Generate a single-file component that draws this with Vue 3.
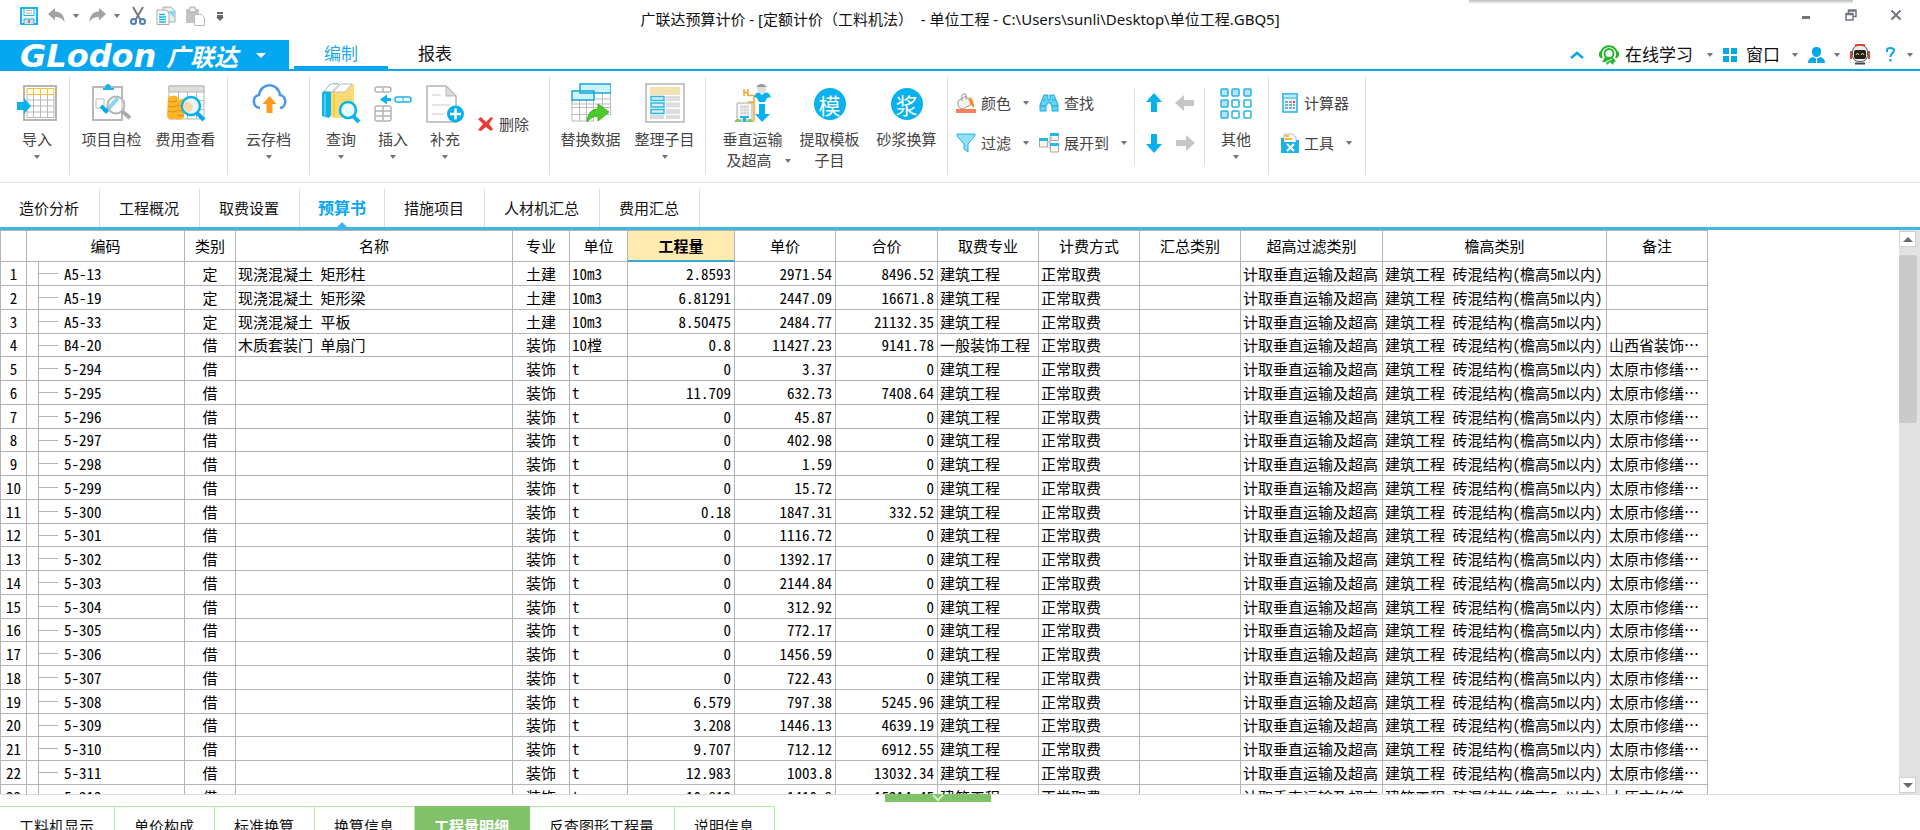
<script setup>
const moduleTabs = ['造价分析', '工程概况', '取费设置', '预算书', '措施项目', '人材机汇总', '费用汇总']
const detailTabs = ['工料机显示', '单价构成', '标准换算', '换算信息', '工程量明细', '反查图形工程量', '说明信息']

const columns = [
  { key: 'no', title: '', cls: 'c-no' },
  { key: 'code', title: '编码', cls: 'c-code' },
  { key: 'kind', title: '类别', cls: 'c-kind' },
  { key: 'name', title: '名称', cls: 'c-name' },
  { key: 'major', title: '专业', cls: 'c-major' },
  { key: 'unit', title: '单位', cls: 'c-unit' },
  { key: 'qty', title: '工程量', cls: 'c-qty' },
  { key: 'price', title: '单价', cls: 'c-price' },
  { key: 'total', title: '合价', cls: 'c-total' },
  { key: 'feeMajor', title: '取费专业', cls: 'c-fee' },
  { key: 'feeMode', title: '计费方式', cls: 'c-mode' },
  { key: 'sumKind', title: '汇总类别', cls: 'c-sum' },
  { key: 'over', title: '超高过滤类别', cls: 'c-over' },
  { key: 'eave', title: '檐高类别', cls: 'c-eave' },
  { key: 'note', title: '备注', cls: 'c-note' },
]

const source = [
  ['A5-13', '2.8593', '2971.54', '8496.52', '现浇混凝土 矩形柱', '10m3'],
  ['A5-19', '6.81291', '2447.09', '16671.8', '现浇混凝土 矩形梁', '10m3'],
  ['A5-33', '8.50475', '2484.77', '21132.35', '现浇混凝土 平板', '10m3'],
  ['B4-20', '0.8', '11427.23', '9141.78', '木质套装门 单扇门', '10樘'],
  ['5-294', '0', '3.37', '0'],
  ['5-295', '11.709', '632.73', '7408.64'],
  ['5-296', '0', '45.87', '0'],
  ['5-297', '0', '402.98', '0'],
  ['5-298', '0', '1.59', '0'],
  ['5-299', '0', '15.72', '0'],
  ['5-300', '0.18', '1847.31', '332.52'],
  ['5-301', '0', '1116.72', '0'],
  ['5-302', '0', '1392.17', '0'],
  ['5-303', '0', '2144.84', '0'],
  ['5-304', '0', '312.92', '0'],
  ['5-305', '0', '772.17', '0'],
  ['5-306', '0', '1456.59', '0'],
  ['5-307', '0', '722.43', '0'],
  ['5-308', '6.579', '797.38', '5245.96'],
  ['5-309', '3.208', '1446.13', '4639.19'],
  ['5-310', '9.707', '712.12', '6912.55'],
  ['5-311', '12.983', '1003.8', '13032.34'],
  ['5-312', '10.812', '1410.8', '15214.45'],
]

const rows = source.map(([code, qty, price, total, name = '', unit = 't'], i) => ({
  no: i + 1,
  code,
  kind: i < 3 ? '定' : '借',
  name,
  major: i < 3 ? '土建' : '装饰',
  unit,
  qty,
  price,
  total,
  feeMajor: i === 3 ? '一般装饰工程' : '建筑工程',
  feeMode: '正常取费',
  sumKind: '',
  over: '计取垂直运输及超高',
  eave: '建筑工程 砖混结构(檐高5m以内)',
  note: i < 3 ? '' : i === 3 ? '山西省装饰…' : '太原市修缮…',
}))
</script>

<template>
  <div class="app">
    <header class="titlebar">
      <div class="quick">
        <button aria-label="保存">
          <svg width="18" height="18" viewBox="0 0 18 18"><path d="M1 1h16v16H1z" fill="#e8f8ff" stroke="#1fb2e8" stroke-width="2" /><path d="M4 1.500h10v7H4z" fill="#fff" stroke="#1fb2e8" /><path d="M6 3.500h6M6 6h6" stroke="#aaa" /><path d="M4 17v-5h10v5" fill="#ddd" stroke="#1fb2e8" /><path d="M9 13v3" stroke="#888" stroke-width="2" /></svg>
        </button>
        <button aria-label="撤销" class="with-caret">
          <svg width="17" height="16" viewBox="0 0 17 16"><path d="M0 6L7 0v3.500c6 0 9.500 4 9.500 11-2-4-4.500-5.500-9.500-5.500v3.500z" fill="#a3a3a3" /></svg><i class="caret"></i>
        </button>
        <button aria-label="重做" class="with-caret">
          <svg width="17" height="16" viewBox="0 0 17 16"><path d="M17 6L10 0v3.500C4 3.500.5 7.500.5 14.500 2.500 10.500 5 9 10 9v3.500z" fill="#a3a3a3" /></svg><i class="caret"></i>
        </button>
        <button aria-label="剪切">
          <svg width="16" height="20" viewBox="0 0 16 20"><path d="M3 1l7.500 13M13 1L5.500 14" stroke="#7b7b7b" stroke-width="2" /><circle cx="3.500" cy="15.500" r="2.500" fill="none" stroke="#4a7ebb" stroke-width="2" /><circle cx="12.500" cy="15.500" r="2.500" fill="none" stroke="#4a7ebb" stroke-width="2" /></svg>
        </button>
        <button aria-label="复制">
          <svg width="20" height="20" viewBox="0 0 20 20"><path d="M7 1h8l4 4v11H7z" fill="#eee" stroke="#aaa" /><path d="M12 5l6 7V5z" fill="#7fd8f5" /><path d="M1 4h9l3 3v11.500H1z" fill="#fff" stroke="#aaa" /><path d="M3 8.500h6M3 11h7M3 13.500h7M3 16h7" stroke="#1fb2e8" stroke-width="1.500" /></svg>
        </button>
        <button aria-label="粘贴">
          <svg width="20" height="20" viewBox="0 0 20 20"><path d="M0 3h13v14H0z" fill="#c3c3c3" /><path d="M4 3V1h5v2h1v3H3V3z" fill="#eee" stroke="#aaa" /><path d="M8.500 8.500h7l3 3v8h-10z" fill="#fff" stroke="#bbb" /></svg>
        </button>
        <button aria-label="自定义快速访问">
          <svg width="8" height="11" viewBox="0 0 8 11"><path d="M1 1h6v2H1zM1 4h6v2H1zM0 6h8L4 10z" fill="#666a73" /></svg>
        </button>
      </div>
      <div class="doc-title">广联达预算计价 - [定额计价（工料机法）&nbsp; - 单位工程 - C:\Users\sunli\Desktop\单位工程.GBQ5]</div>
      <div class="win-ctl">
        <button aria-label="最小化"><svg width="12" height="12" viewBox="0 0 12 12"><path d="M2 7h8v3H2z" fill="#70747f" /></svg></button>
        <button aria-label="还原"><svg width="12" height="12" viewBox="0 0 12 12"><path d="M3.500 4V1H11v6.500H8.500M3 2h8" fill="none" stroke="#70747f" stroke-width="1.500" /><path d="M1 4.500h7V11H1zM1 5.500h7" fill="none" stroke="#70747f" stroke-width="1.500" /></svg></button>
        <button aria-label="关闭"><svg width="12" height="12" viewBox="0 0 12 12"><path d="M1.500 1.500l9 9M10.500 1.500l-9 9" stroke="#70747f" stroke-width="2" /></svg></button>
      </div>
      <div class="top-shade"></div>
    </header>

    <nav class="menubar">
      <button class="brand"><span class="brand-en">GLodon</span><span class="brand-cn">广联达</span><i class="caret light"></i></button>
      <button class="menu on">编制</button>
      <button class="menu">报表</button>
      <div class="tools">
        <button aria-label="收起"><svg width="14" height="8" viewBox="0 0 14 8"><path d="M1 7l6-5 6 5" fill="none" stroke="#0aa6ec" stroke-width="2.500" /></svg></button>
        <button class="learn">
          <svg width="20" height="21" viewBox="0 0 20 21"><path d="M3 14a8 8 0 1 1 14 0" fill="none" stroke="#27b62b" stroke-width="2" /><circle cx="10" cy="9.500" r="4.500" fill="none" stroke="#27b62b" stroke-width="2" /><path d="M1 7h2v7H1.500L0 12V9zM17 7h2l1 2v3l-2 2h-1z" fill="#27b62b" /><path d="M6 13l-3 5h4l1 3 3-3 3 3 1-3 2-1-4-4-3 1z" fill="#27b62b" /><path d="M7 18l6-3" stroke="#fff" /></svg>
          <span>在线学习</span><i class="caret"></i>
        </button>
        <button class="window">
          <svg width="14" height="14" viewBox="0 0 14 14"><path d="M0 0h6v6H0zM8 0h6v6H8zM0 8h6v6H0zM8 8h6v6H8z" fill="#0aa6ec" /></svg>
          <span>窗口</span><i class="caret"></i>
        </button>
        <button aria-label="用户" class="user">
          <svg width="17" height="16" viewBox="0 0 17 16"><path d="M4 4q0-4 4.500-4T13 4v2q-1 4-4.500 4T4 6zM0 16q0-5 5-6l3.500 2L12 10q5 1 5 6z" fill="#0aa6ec" /><path d="M8.500 12v4" stroke="#fff" /></svg><i class="caret"></i>
        </button>
        <button aria-label="助手">
          <svg width="20" height="21" viewBox="0 0 20 21"><rect x="2.500" y="1.500" width="15" height="16" rx="6" fill="#eee" stroke="#555" /><path d="M5 1h10" stroke="#e0442e" stroke-width="2" /><path d="M1 7v8M19 7v8" stroke="#c84a38" stroke-width="2" /><rect x="4" y="6" width="12" height="9" rx="2" fill="#222" /><path d="M6 11l1.500-2L9 11M11 11l1.500-2L14 11" stroke="#f2e02a" fill="none" /><path d="M5 19.500h10" stroke="#444" stroke-width="2" /></svg>
        </button>
        <button aria-label="帮助" class="help">
          <svg width="9" height="15" viewBox="0 0 9 15"><path d="M1 5V3q0-2 3.500-2T8 3.500C8 6 4.500 6 4.500 10" fill="none" stroke="#0aa6ec" stroke-width="2" /><path d="M3.500 12h2v2.500h-2z" fill="#0aa6ec" /></svg><i class="caret"></i>
        </button>
      </div>
    </nav>

    <section class="ribbon">
      <div class="group g-import">
        <button class="big">
          <svg width="40" height="40" viewBox="0 0 40 40"><path d="M7 3h32v34H7z" fill="#fff" stroke="#b5b5b5" stroke-width="2" /><path d="M10 11.500h27v23H10zM10 17h27M10 23h27M10 29h27M16.500 11v24M23.500 11v24M30.500 11v24" fill="none" stroke="#b9b9b9" /><path d="M10 5.500h27v6H10zM16.500 5v6M23.500 5v6M30.500 5v6" fill="#fffbe8" stroke="#f7bd3c" /><path d="M0 19h7v-4l7 8-7 8v-4H0z" fill="#0ab2ee" /></svg>
          <span>导入</span><i class="caret"></i>
        </button>
      </div>
      <div class="group g-check">
        <button class="big wide">
          <svg width="40" height="40" viewBox="0 0 40 40"><path d="M1 4h29v33H1z" fill="#fff" stroke="#b9b9b9" stroke-width="2" /><path d="M11 5h2q0-4 3-4t3 4h3v2H11z" fill="#1fb2e8" /><path d="M4 16h8v9H4z" fill="#fff" stroke="#bbb" /><path d="M9 23l5 5 12-13" fill="none" stroke="#08aaf0" stroke-width="4" /><circle cx="24" cy="22" r="8.500" fill="#ffffff80" stroke="#b5b5b5" stroke-width="2" /><path d="M30 28l8 7" stroke="#aaa" stroke-width="4" /></svg>
          <span>项目自检</span>
        </button>
        <button class="big wide">
          <svg width="40" height="40" viewBox="0 0 40 40"><path d="M3 3h35v33H3z" fill="#fff" stroke="#b5b5b5" /><path d="M3 3h35v6H3z" fill="#dededa" stroke="#b5b5b5" /><path d="M3 17.500h35M3 26.500h35M12.500 9v27M21.500 9v27M30.500 9v27" stroke="#bbb" /><path d="M2 14q6-3 10 0l1 3q5-3 5 1v17q-5 3-9 1-7 1-8-3z" fill="#fdb52a" /><path d="M2 18q5 2 9 0M2 23q5 2 9 0M2 28q5 2 9 0M11 22q4 2 7 0M11 27q4 2 7 0M11 32q4 2 7 0" fill="none" stroke="#e08e0c" /><circle cx="25" cy="23" r="9" fill="#e8f7ff" stroke="#08b2ee" stroke-width="2.500" /><circle cx="22" cy="24" r="5" fill="#f8d9a8" /><path d="M31 30l7 7" stroke="#08aaf0" stroke-width="4" /></svg>
          <span>费用查看</span>
        </button>
      </div>
      <div class="group g-cloud">
        <button class="big">
          <svg width="40" height="40" viewBox="0 0 40 40"><path d="M11 25C3 24 3 13 10 12 12-1 29-1 31 12c7 1 7 12 0 13" fill="none" stroke="#4796f2" stroke-width="2.500" /><path d="M20.500 13l7 8h-4v9h-6v-9h-4z" fill="#ff9a1c" /></svg>
          <span>云存档</span><i class="caret"></i>
        </button>
      </div>
      <div class="group g-edit">
        <button class="big">
          <svg width="40" height="40" viewBox="0 0 40 40"><path d="M1 10L9 1l8-1-6 9v22l-3 4-7-2z" fill="#08b4e8" /><path d="M4 11v22" stroke="#9de3f5" /><path d="M10 10L20 1h13v27l-11 7H12q-2-1-2-4z" fill="#fddb74" /><path d="M3 8L10 1h8l-7 8zM12 9l8-8h11l-7 8z" fill="#fff" stroke="#bbb" /><path d="M13 11v22" stroke="#ffc743" stroke-width="2" /><circle cx="27" cy="27" r="8" fill="#e8faff" stroke="#08b4e8" stroke-width="2.500" /><path d="M32 33l6 6" stroke="#08b4e8" stroke-width="4" /></svg>
          <span>查询</span><i class="caret"></i>
        </button>
        <button class="big">
          <svg width="40" height="40" viewBox="0 0 40 40"><g fill="#fff" stroke="#b5b5b5" stroke-width="1.500"><rect x="2" y="4" width="16" height="5" rx="2" /><rect x="2" y="23" width="16" height="15" rx="2" /><path d="M10 4v5M10 23v15M2 28h16M2 33h16" /></g><rect x="22" y="14" width="16" height="5" rx="2" fill="#fff" stroke="#1fb2e8" stroke-width="1.500" /><path d="M30 14v5" stroke="#1fb2e8" /><path d="M7 16.500l7-5V15h4v3h-4v3.500z" fill="#08b2ee" /></svg>
          <span>插入</span><i class="caret"></i>
        </button>
        <button class="big">
          <svg width="40" height="40" viewBox="0 0 40 40"><path d="M2 3h19l10 10v26H2z" fill="#fff" stroke="#b5b5b5" stroke-width="1.500" /><path d="M21 3v10h10z" fill="#ddd" stroke="#b5b5b5" /><path d="M7 12h9M7 22h18M7 31h12" stroke="#ddd" stroke-width="1.500" /><circle cx="30.500" cy="31" r="8.500" fill="#08b0e8" /><path d="M25 31h11M30.500 25.500v11" stroke="#fff" stroke-width="2.500" /></svg>
          <span>补充</span><i class="caret"></i>
        </button>
        <button class="small delete">
          <svg width="16" height="16" viewBox="0 0 16 16"><path d="M0 3l3-2 5 5 5-5 2 1-4 6 4 5-2 2-5-4-5 4-3-1 5-6z" fill="#ee3a35" /></svg>
          <span>删除</span>
        </button>
      </div>
      <div class="group g-data">
        <button class="big wide">
          <svg width="40" height="40" viewBox="0 0 40 40"><path d="M1 16h39v5H1zM8.500 10v28M15.500 10v28M22.500 10v28M31.500 10v20M39.500 10v22M1 16.500V38h22M1 24.500h38M1 31.500h38" fill="none" stroke="#bbb" /><path d="M9 1h31v9H9zM1 8h22v9H1z" fill="#cdf3ff" stroke="#16a7d6" stroke-width="1.500" /><path d="M16 39q1-13 11-13v-5l11 8-11 9v-5q-7 0-11 6z" fill="#4ccb2d" stroke="#35b11c" /></svg>
          <span>替换数据</span>
        </button>
        <button class="big wide">
          <svg width="40" height="40" viewBox="0 0 40 40"><path d="M1 1h38v38H1z" fill="#fff" stroke="#b5b5b5" stroke-width="1.500" /><path d="M5 4h30v8H5z" fill="#f5e2b3" /><path d="M6 13.500h13v4H6zM6 20h13v4H6zM6 26.500h13v4H6z" fill="#e3eaf0" stroke="#25bbec" stroke-width="1.500" /><path d="M21 13h14v5H21zM21 19.500h14v5H21zM21 26h14v5H21zM5 32h14v4H5zM21 32h14v4H21z" fill="#dcdce0" /></svg>
          <span>整理子目</span><i class="caret"></i>
        </button>
      </div>
      <div class="group g-trans">
        <button class="big wide">
          <svg width="40" height="40" viewBox="0 0 40 40"><path d="M11 6v7M15 6v7M11 9.500h4" stroke="#f7a32b" stroke-width="1.500" /><path d="M15 12.500h6v26M15 19h6" fill="none" stroke="#ffa526" stroke-width="1.500" /><path d="M4 20h15v17H4z" fill="#f7f7f7" stroke="#aaa" /><path d="M7 24h9M7 27h9M7 30h9M9 22v10M12 22v10M15 22v10" stroke="#ccc" /><path d="M7 35h9v-2h-9zM10 35h3v4h-3z" fill="#1fb2e8" /><path d="M1 39q3-6 9 0zM13 39q4-6 8 0z" fill="#86c672" /><path d="M24 3q5-5 9 0v5q-4 5-8 0z" fill="#ddd" /><path d="M23 4q5-6 11 0z" fill="#999" /><path d="M21 14q3-7 7-3 1 2 2 0 5-4 8 3l-4 1-2 4h-6l-2-4zM26 21h6v10h5l-8 8-7-8h4z" fill="#08b2ee" /></svg>
          <span>垂直运输</span><span class="second shifted">及超高<i class="caret"></i></span>
        </button>
        <button class="big wide">
          <i class="disc">模</i>
          <span>提取模板</span><span class="second">子目</span>
        </button>
        <button class="big wide">
          <i class="disc">浆</i>
          <span>砂浆换算</span>
        </button>
      </div>
      <div class="group g-view">
        <div class="stack color-col">
          <button class="small">
            <svg width="20" height="20" viewBox="0 0 20 20"><path d="M2 8l8-5 6 8-9 5q-6 0-5-8z" fill="#f4f4f4" stroke="#999" /><path d="M6 8V3q0-3 4-2v6" fill="none" stroke="#999" /><path d="M13 4q5 1 5 11l-4-4z" fill="#ff8a1c" /><path d="M0 16h20v4H0z" fill="#f98058" /></svg>
            <span>颜色</span><i class="caret"></i>
          </button>
          <button class="small">
            <svg width="20" height="20" viewBox="0 0 20 20"><path d="M1 1h18v2l-7 8v8l-4-3v-5L1 3z" fill="#8fe0f8" stroke="#1fb2e8" /></svg>
            <span>过滤</span><i class="caret"></i>
          </button>
        </div>
        <div class="stack find-col">
          <button class="small">
            <svg width="20" height="20" viewBox="0 0 20 20"><path d="M1 18v-6L5 2h4v5h2V2h4l4 10v6h-6v-6h-1v-2H8v2H7v6z" fill="#66d3f5" stroke="#12a9df" /><path d="M1 13h6M13 13h6M4 7h3M13 7h3" stroke="#12a9df" /></svg>
            <span>查找</span>
          </button>
          <button class="small">
            <svg width="20" height="20" viewBox="0 0 20 20"><path d="M8 9h3v7h2M11 9V4h2" fill="none" stroke="#aaa" /><path d="M.5 6h8v8h-8zM12 1.500h7.500v6H12zM11.500 12h8v7h-8z" fill="#fdf6ec" stroke="#aaa" /><path d="M0 5h9v3H0zM11 0h9v3h-9zM11 10h9v3h-9z" fill="#22b8ee" /></svg>
            <span>展开到</span><i class="caret"></i>
          </button>
        </div>
        <i class="sep"></i>
        <div class="arrows">
          <button aria-label="上移"><svg width="18" height="20" viewBox="0 0 18 20"><path d="M9 0l8 9h-5v10H6V9H1z" fill="#08b0ee" /></svg></button>
          <button aria-label="左移"><svg width="20" height="18" viewBox="0 0 20 18"><path d="M0 9l9-8v5h10v6H9v5z" fill="#c6c6c6" /></svg></button>
          <button aria-label="下移"><svg width="18" height="20" viewBox="0 0 18 20"><path d="M9 20l8-9h-5V1H6v10H1z" fill="#08b0ee" /></svg></button>
          <button aria-label="右移"><svg width="20" height="18" viewBox="0 0 20 18"><path d="M20 9l-9-8v5H1v6h10v5z" fill="#c6c6c6" /></svg></button>
        </div>
        <i class="sep"></i>
        <button class="big other">
          <svg width="40" height="40" viewBox="0 0 40 40"><g stroke="#25b4e4" stroke-width="1.500" fill="#fff"><g fill="#bfe0f5"><rect x="5" y="6" width="7" height="7" rx="1" /><rect x="16" y="6" width="7" height="7" rx="1" /><rect x="28" y="6" width="7" height="7" rx="1" /><rect x="5" y="17" width="7" height="7" rx="1" /><rect x="5" y="28" width="7" height="7" rx="1" /></g><rect x="16" y="17" width="7" height="7" rx="1" /><rect x="28" y="17" width="7" height="7" rx="1" /><rect x="16" y="28" width="7" height="7" rx="1" /><rect x="28" y="28" width="7" height="7" rx="1" /></g></svg>
          <span>其他</span><i class="caret"></i>
        </button>
      </div>
      <div class="group g-tools">
        <div class="stack">
          <button class="small">
            <svg width="18" height="20" viewBox="0 0 18 20"><path d="M2 1h14v18H2z" fill="#e9f6fd" stroke="#1fb2e8" stroke-width="1.500" /><path d="M2 1h14v4H2z" fill="#bfe9fa" stroke="#1fb2e8" /><path d="M4 9h3M8 9h3M4 12h3M8 12h3M12 12h2M4 15h3M8 15h3M12 15h2" stroke="#5a8fc0" stroke-width="1.500" /><path d="M12 9h2" stroke="#e33" stroke-width="2" /></svg>
            <span>计算器</span>
          </button>
          <button class="small">
            <svg width="18" height="20" viewBox="0 0 18 20"><path d="M3 1h8l4 3v8H3z" fill="#fff" stroke="#bbb" /><path d="M4 3h4M4 6h7" stroke="#fbb72c" stroke-width="2" /><path d="M0 5h3v4h12V7h3v13H0z" fill="#1fb0e6" /><path d="M6 11l7 7M13 11l-7 7" stroke="#fff" stroke-width="2" /></svg>
            <span>工具</span><i class="caret"></i>
          </button>
        </div>
      </div>
    </section>

    <nav class="modules">
      <button v-for="t in moduleTabs" :key="t" :class="{ on: t === '预算书' }">{{ t }}</button>
    </nav>

    <main class="sheet">
      <div class="viewport">
        <table>
          <colgroup><col v-for="c in columns" :key="c.key" :class="c.cls" /></colgroup>
          <thead>
            <tr><th v-for="c in columns" :key="c.key" :class="{ picked: c.key === 'qty' }" scope="col">{{ c.title }}</th></tr>
          </thead>
          <tbody>
            <tr v-for="r in rows" :key="r.no">
              <td v-for="c in columns" :key="c.key" :class="'d-' + c.key">{{ r[c.key] }}</td>
            </tr>
          </tbody>
        </table>
      </div>
      <div class="scroll">
        <button aria-label="向上滚动"><i class="tri up"></i></button>
        <div class="thumb"></div>
        <button aria-label="向下滚动" class="down"><i class="tri"></i></button>
      </div>
      <button class="handle" aria-label="收起明细"><svg width="12" height="8" viewBox="0 0 12 8"><path d="M1 1l5 5 5-5" fill="none" stroke="#d5f0c8" stroke-width="2" /></svg></button>
    </main>

    <footer class="detail">
      <button v-for="t in detailTabs" :key="t" :class="{ on: t === '工程量明细' }">{{ t }}</button>
    </footer>
  </div>
</template>

<style>
body {
  margin: 0;
  overflow: hidden;
}
</style>

<style scoped>
* {
  box-sizing: border-box;
}
.app {
  height: 100vh;
  display: flex;
  flex-direction: column;
  overflow: hidden;
  background: #fff;
  color: #111;
  font: 15px/20px "Noto Sans", "Noto Sans CJK SC", sans-serif;
  white-space: nowrap;
}
button {
  display: inline-flex;
  align-items: center;
  justify-content: center;
  padding: 0;
  border: 0;
  background: none;
  color: inherit;
  font: inherit;
  white-space: nowrap;
}
svg {
  display: block;
  flex: none;
}
.caret {
  flex: none;
  width: 0;
  height: 0;
  border: 3px solid transparent;
  border-top: 4px solid #70747f;
  border-bottom: 0;
}
.caret.light {
  border-width: 5px 5px 0;
  border-top-color: #fff;
}

.titlebar {
  position: relative;
  flex: none;
  height: 40px;
  display: grid;
  grid-template-columns: 1fr auto 1fr;
  align-items: start;
}
.quick {
  display: flex;
  align-items: center;
  gap: 10px;
  height: 32px;
  padding-left: 20px;
}
.with-caret {
  gap: 8px;
}
.doc-title {
  padding-top: 9px;
}
.win-ctl {
  display: flex;
  justify-content: flex-end;
  gap: 33px;
  padding: 9px 18px 0 0;
}
.top-shade {
  position: absolute;
  top: 0;
  right: 67px;
  width: 20%;
  height: 4px;
  background: linear-gradient(#bdbdbd, #fff);
}

.menubar {
  flex: none;
  display: flex;
  height: 31px;
  border-bottom: 2px solid #08a6ef;
  font-size: 17px;
}
.brand {
  width: 289px;
  height: 31px;
  margin-right: 5px;
  padding-left: 20px;
  justify-content: flex-start;
  background: #05a7f1;
  color: #fff;
}
.brand-en {
  width: 146px;
  text-align: left;
  font: italic bold 32px/30px "DejaVu Sans", sans-serif;
}
.brand-cn {
  width: 90px;
  text-align: left;
  font: italic bold 24px/30px "Noto Sans CJK SC", sans-serif;
}
.menu {
  width: 94px;
  height: 29px;
  padding-top: 2px;
  border-bottom: 3px solid transparent;
}
.menu.on {
  color: #1fa9e6;
  border-color: #08a6ef;
}
.tools {
  margin-left: auto;
  display: flex;
  align-items: center;
  gap: 10px;
  padding-right: 7px;
}
.learn {
  gap: 6px;
  margin-left: 5px;
}
.learn .caret {
  margin-left: 8px;
}
.window {
  gap: 9px;
}
.window .caret {
  margin-left: 3px;
}
.user {
  gap: 9px;
}
.help {
  gap: 12px;
  margin-left: 6px;
}

.ribbon {
  flex: none;
  display: flex;
  height: 112px;
  padding: 6px 0 7px;
  border-bottom: 1px solid #e4e4e4;
  color: #444;
}
.group {
  display: flex;
  justify-content: center;
  border-right: 1px solid #dedede;
}
.g-import {
  width: 70px;
  padding-left: 5px;
}
.g-check {
  width: 158px;
}
.g-cloud {
  width: 82px;
}
.g-edit {
  width: 240px;
  justify-content: flex-start;
  padding-left: 5px;
}
.g-data {
  width: 156px;
}
.g-trans {
  width: 242px;
  gap: 3px;
  padding-left: 6px;
}
.g-view {
  width: 321px;
  justify-content: flex-start;
  padding-left: 8px;
}
.g-tools {
  width: 97px;
  justify-content: flex-start;
  padding-left: 12px;
}
.big {
  width: 52px;
  flex-direction: column;
  justify-content: flex-start;
  padding-top: 6px;
  line-height: 21px;
}
.big.wide {
  width: 74px;
}
.big > svg {
  margin-bottom: 6px;
}
.big > .caret {
  margin-top: 5px;
}
.disc {
  width: 32px;
  height: 32px;
  margin: 5px 0 9px;
  border-radius: 50%;
  background: #08b2ee;
  color: #fff;
  font: normal 22px/32px "Noto Sans CJK SC", sans-serif;
}
.second {
  display: flex;
  align-items: center;
  gap: 13px;
}
.shifted {
  margin-left: 12px;
}
.small {
  gap: 5px;
  height: 40px;
  justify-content: flex-start;
}
.small .caret {
  margin-left: 7px;
}
.delete {
  margin: 27px 0 0 7px;
}
.stack {
  display: flex;
  flex-direction: column;
  padding-top: 6px;
}
.color-col {
  width: 83px;
}
.find-col {
  width: 95px;
}
.sep {
  width: 1px;
  height: 77px;
  margin-top: 11px;
  background: #dedede;
}
.arrows {
  width: 69px;
  display: grid;
  grid-template-columns: 1fr 1fr;
  grid-template-rows: 40px 40px;
  padding: 6px 3px 0;
}
.other {
  width: 62px;
}

.modules {
  flex: none;
  display: flex;
  height: 47px;
  padding-top: 6px;
  border-bottom: 3px solid #41b6e6;
}
.modules button {
  position: relative;
  padding: 0 20px 0 19px;
  border-right: 1px solid #dedede;
}
.modules .on {
  padding: 0 18px;
  color: #08a6ef;
  font-size: 16px;
  font-weight: bold;
}
.modules .on::after {
  content: "";
  position: absolute;
  bottom: 0;
  left: calc(50% - 5px);
  border: 5px solid transparent;
  border-top: 0;
  border-bottom-color: #41b6e6;
}

.sheet {
  position: relative;
  flex: 1;
  min-height: 0;
  display: flex;
  border-bottom: 1px solid #ddd;
}
.viewport {
  flex: 1;
  overflow: hidden;
  font-family: "Noto Sans Mono CJK SC", "Noto Sans CJK SC", monospace;
}
table {
  table-layout: fixed;
  width: 1708px;
  border-spacing: 0;
  color: #000;
}
.c-no { width: 27px; }
.c-code { width: 158px; }
.c-kind { width: 51px; }
.c-name { width: 277px; }
.c-major { width: 57px; }
.c-unit { width: 58px; }
.c-qty { width: 107px; }
.c-price { width: 101px; }
.c-total { width: 102px; }
.c-fee, .c-mode, .c-sum, .c-note { width: 101px; }
.c-over { width: 142px; }
.c-eave { width: 224px; }
th {
  height: 32px;
  padding: 0;
  border: solid #b4b4b4;
  border-width: 1px 1px 1px 0;
  font-weight: normal;
}
th.picked {
  background: #ffebb0;
  border-bottom: 2px solid #35a8d8;
  font-weight: bold;
}
td {
  height: 24px;
  padding: 0 3px 0 2px;
  border: solid #b4b4b4;
  border-width: 0 1px 1px 0;
  line-height: 20px;
  overflow: hidden;
}
th:first-child,
td:first-child {
  border-left-width: 1px;
}
tr:nth-child(4n) td {
  height: 23px;
}
.d-no,
.d-kind,
.d-major {
  padding: 0;
  text-align: center;
}
.d-code {
  padding-left: 37px;
  background:
    linear-gradient(#b4b4b4, #b4b4b4) 11px 0 / 1px 100% no-repeat,
    linear-gradient(#b4b4b4, #b4b4b4) 11px 50% / 20px 1px no-repeat;
}
.d-qty,
.d-price,
.d-total {
  text-align: right;
}

.scroll {
  flex: none;
  width: 21px;
  padding: 1px 3px 1px 0;
  display: flex;
  flex-direction: column;
  background: #e2e2e2;
}
.scroll button {
  height: 16px;
  width: 17px;
  background: #fff;
  border: 1px solid #d0d0d0;
}
.thumb {
  height: 168px;
  margin-top: 8px;
  border-radius: 3px;
  background: #cacaca;
}
.scroll .down {
  margin-top: auto;
}
.tri {
  border: 5px solid transparent;
  border-top-color: #666a73;
  border-bottom: 0;
}
.tri.up {
  border-top: 0;
  border-bottom: 5px solid #666a73;
}
.handle {
  position: absolute;
  z-index: 1;
  top: 100%;
  left: calc(50% - 75px);
  width: 106px;
  height: 8px;
  background: #80c269;
}

.detail {
  flex: none;
  display: flex;
  align-items: flex-start;
  height: 35px;
  padding-top: 11px;
  overflow: hidden;
}
.detail button {
  height: 38px;
  padding: 0 20px 0 19px;
  border: solid #b5e8a0;
  border-width: 1px 1px 0 0;
}
.detail .on {
  background: #80c269;
  border-color: #80c269;
  color: #fff;
  font-weight: bold;
}
</style>
